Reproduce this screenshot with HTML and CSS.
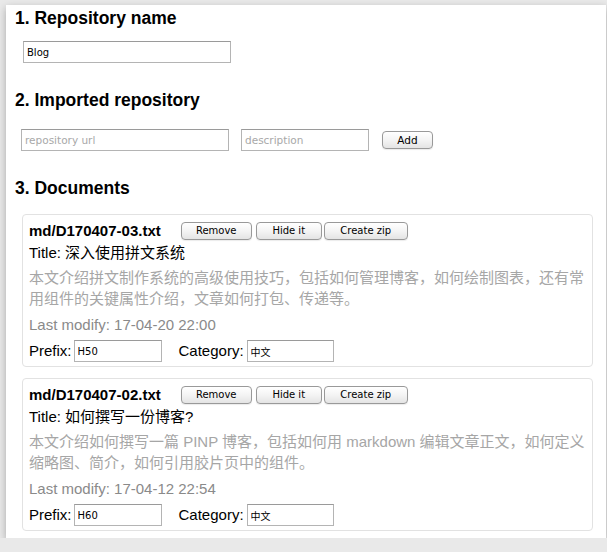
FILE: index.html
```html
<!DOCTYPE html>
<html>
<head>
<meta charset="utf-8">
<link rel="stylesheet" href="styles.css">
</head>
<body>
<div class="panel">
  <h2 class="heading h-first">1. Repository name</h2>
  <input class="field field-name" type="text" value="Blog">

  <h2 class="heading h-next">2. Imported repository</h2>
  <div class="import-row">
    <input class="field field-url" type="text" placeholder="repository url">
    <input class="field field-desc" type="text" placeholder="description">
    <button class="btn btn-add">Add</button>
  </div>

  <h2 class="heading h-next">3. Documents</h2>
  <div class="docs">
    <div class="card">
      <div class="row-head">
        <span class="fname">md/D170407-03.txt</span>
        <button class="btn btn-remove">Remove</button>
        <button class="btn btn-hide">Hide it</button>
        <button class="btn btn-zip">Create zip</button>
      </div>
      <div class="title">Title: 深入使用拼文系统</div>
      <div class="desc">本文介绍拼文制作系统的高级使用技巧，包括如何管理博客，如何绘制图表，还有常用组件的关键属性介绍，文章如何打包、传递等。</div>
      <div class="modified">Last modify: 17-04-20 22:00</div>
      <div class="row-meta">
        <span class="label">Prefix:</span>
        <input class="field field-small field-prefix" type="text" value="H50">
        <span class="label label-cat">Category:</span>
        <input class="field field-small field-cat" type="text" value="中文">
      </div>
    </div>
    <div class="card">
      <div class="row-head">
        <span class="fname">md/D170407-02.txt</span>
        <button class="btn btn-remove">Remove</button>
        <button class="btn btn-hide">Hide it</button>
        <button class="btn btn-zip">Create zip</button>
      </div>
      <div class="title">Title: 如何撰写一份博客?</div>
      <div class="desc">本文介绍如何撰写一篇 PINP 博客，包括如何用 markdown 编辑文章正文，如何定义缩略图、简介，如何引用胶片页中的组件。</div>
      <div class="modified">Last modify: 17-04-12 22:54</div>
      <div class="row-meta">
        <span class="label">Prefix:</span>
        <input class="field field-small field-prefix" type="text" value="H60">
        <span class="label label-cat">Category:</span>
        <input class="field field-small field-cat" type="text" value="中文">
      </div>
    </div>
  </div>
</div>
</body>
</html>
```

FILE: styles.css
```css
html, body {
  margin: 0;
  padding: 0;
  background: #e9e9e9;
}
body {
  font-family: "Liberation Sans", "Noto Sans CJK SC", sans-serif;
  color: #000;
  overflow: hidden;
}
.panel {
  margin: 5px 0 0 6px;
  width: 591px;
  height: 530px;
  padding: 3px 0 0 9px;
  background: #fff;
  box-shadow: 0 3px 8px rgba(0, 0, 0, 0.28);
}
.heading {
  margin: 0;
  font-size: 17.5px;
  line-height: 20px;
  font-weight: bold;
}
.h-next {
  margin-top: 27px;
}
.field {
  box-sizing: border-box;
  height: 22px;
  border: 1px solid #b4b4b4;
  border-top-color: #9a9a9a;
  padding: 0 3px;
  font-family: "DejaVu Sans", "Noto Sans CJK SC", sans-serif;
  font-size: 10px;
  color: #000;
  background: #fff;
  outline: none;
  display: block;
}
.field::placeholder {
  color: #a8a8a8;
  font-size: 10.5px;
}
.field-name {
  margin: 13px 0 0 8px;
  width: 208px;
}
.import-row {
  display: flex;
  align-items: center;
  margin: 19px 0 0 6px;
  height: 22px;
}
.field-url {
  width: 208px;
}
.field-desc {
  width: 128px;
  margin-left: 12px;
}
.btn {
  box-sizing: border-box;
  height: 18px;
  padding: 0;
  border: 1px solid #999;
  border-radius: 4px;
  background: linear-gradient(#ffffff, #f4f4f4 50%, #e4e4e4);
  box-shadow: 0 1px 1px rgba(0, 0, 0, 0.08);
  font-family: "DejaVu Sans", sans-serif;
  font-size: 10px;
  color: #000;
  line-height: 16px;
  text-align: center;
}
.btn-add {
  width: 51px;
  margin-left: 13px;
  font-size: 10.5px;
}
.docs {
  margin: 16px 0 0 7px;
}
.card {
  width: 571px;
  box-sizing: border-box;
  border: 1px solid #e2e2e2;
  border-radius: 4px;
  padding: 5px 6px 2px;
  margin-bottom: 11px;
  font-size: 15px;
}
.row-head {
  display: flex;
  align-items: center;
  height: 22px;
}
.fname {
  font-weight: bold;
  line-height: 22px;
  margin-right: 20px;
}
.btn-remove {
  width: 71px;
}
.btn-hide {
  width: 66px;
  margin-left: 4px;
}
.btn-zip {
  width: 84px;
  margin-left: 2px;
}
.title {
  line-height: 22px;
}
.desc {
  margin-top: 3px;
  line-height: 21px;
  color: #a6a6a6;
}
.modified {
  margin-top: 5px;
  line-height: 22px;
  color: #8a8a8a;
}
.row-meta {
  margin-top: 2px;
  height: 26px;
  display: flex;
  align-items: center;
}
.label {
  line-height: 22px;
}
.field-prefix {
  width: 88px;
  margin-left: 2px;
}
.label-cat {
  margin-left: 17px;
}
.field-cat {
  width: 87px;
  margin-left: 3px;
}
```
